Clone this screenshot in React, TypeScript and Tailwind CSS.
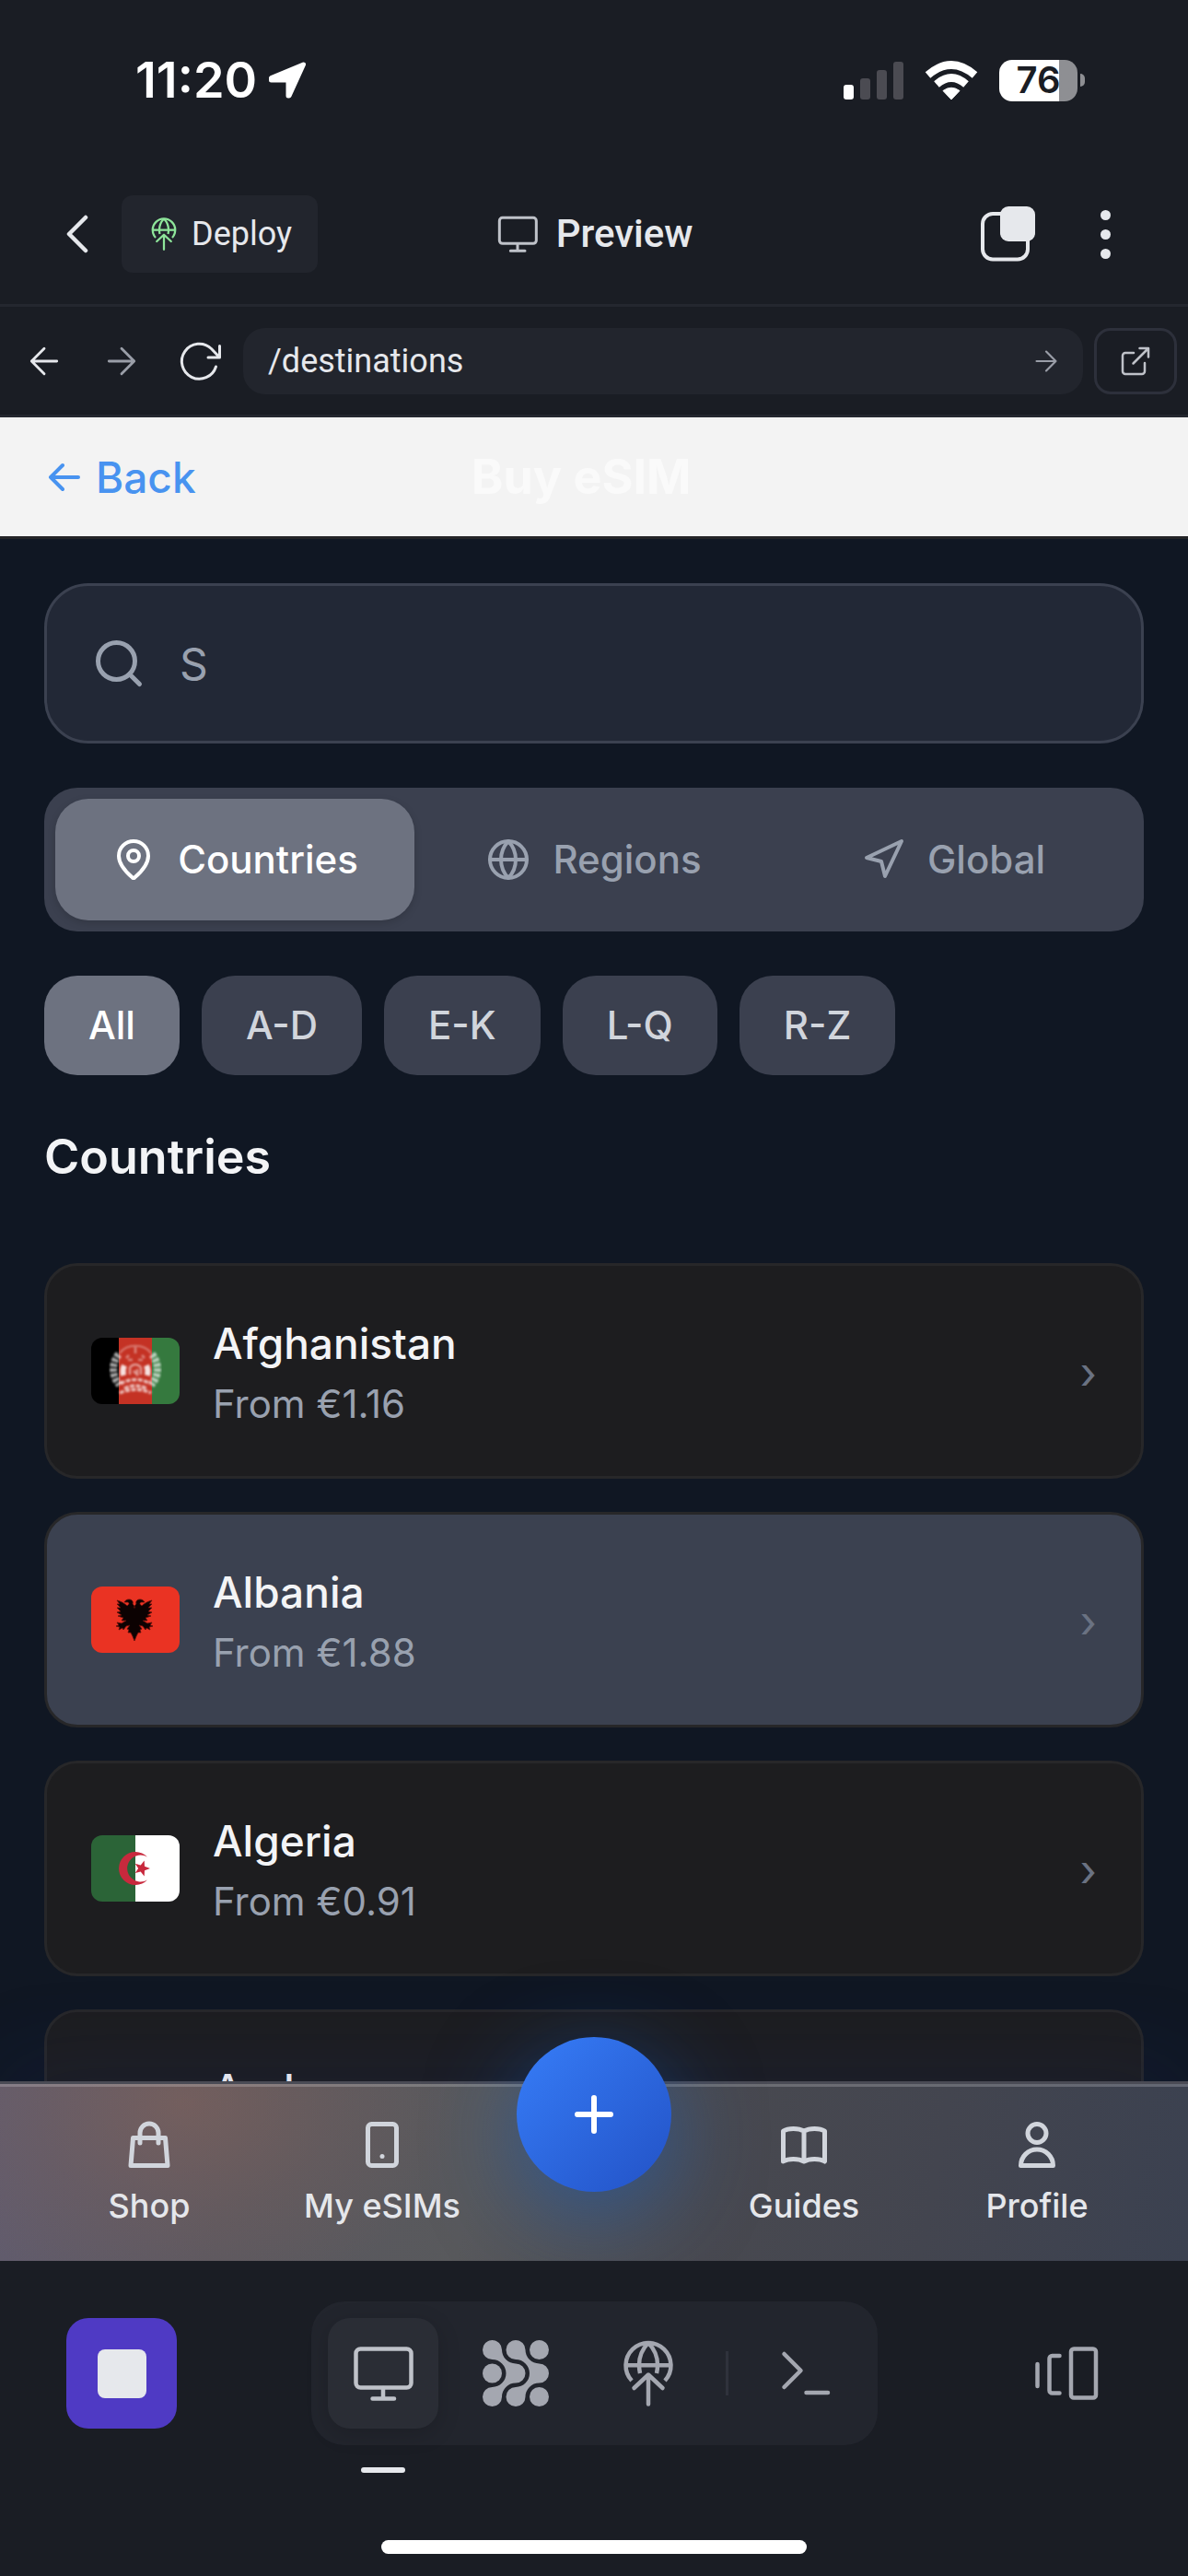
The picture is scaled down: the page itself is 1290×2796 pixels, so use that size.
import { useState, type ReactNode } from "react";
import { Globe, MapPin, Navigation, Search } from "lucide-react";

type IconProps = { className?: string };

function LocationArrow() {
  return (
    <svg viewBox="0 0 42 40" className="h-10 w-[42px]" fill="white" stroke="white" strokeWidth="5" strokeLinejoin="round" aria-hidden="true">
      <path d="M38.5 3 3.5 17.5v2.5h18.5v17h1z" />
    </svg>
  );
}

function Signal() {
  return (
    <svg viewBox="0 0 65 42" className="h-[42px] w-[65px]" aria-hidden="true">
      <rect x="0" y="26" width="11" height="16" rx="3" fill="white" />
      <rect x="18" y="19" width="11" height="23" rx="3" fill="#4b4b52" />
      <rect x="36" y="10" width="11" height="32" rx="3" fill="#4b4b52" />
      <rect x="54" y="1" width="11" height="41" rx="3" fill="#4b4b52" />
    </svg>
  );
}

function Wifi() {
  return (
    <svg viewBox="0 0 58 42" className="h-[42px] w-[58px]" aria-hidden="true">
      <path d="M29 42 20 32.5Q29 26 38 32.5z" fill="white" stroke="white" strokeWidth="1" strokeLinejoin="round" />
      <path d="M13 25.500Q29 11.500 45 25.500" fill="none" stroke="white" strokeWidth="8.500" />
      <path d="M3.500 15.500Q29 -6.500 54.500 15.500" fill="none" stroke="white" strokeWidth="8.500" />
    </svg>
  );
}

function Battery() {
  return (
    <div className="flex items-center gap-[3px]">
      <div className="flex h-[45px] w-[85px] items-center justify-center rounded-[14px] bg-linear-to-r from-white from-76% to-[#8e8f93] to-76%">
        <span className="text-[40px] leading-none font-semibold text-[#1a1d24]">76</span>
      </div>
      <span className="h-[14px] w-[5px] rounded-r-full bg-[#8e8f93]" />
    </div>
  );
}

function DeployIcon({ className }: IconProps) {
  return (
    <svg viewBox="0 0 72 72" className={className} fill="none" stroke="currentColor" strokeWidth="4.500" strokeLinejoin="round" aria-hidden="true">
      <path d="M18 44A24.500 24.500 0 1 1 54 44M11.500 27.300h49" />
      <path d="M36 3C30 9 26 18 26 27c0 3 .3 6 1 9M36 3c6 6 10 15 10 24 0 3-.3 6-1 9" />
      <path d="M36 38v31.500M20.500 52 36 37.500 51.500 52" strokeLinecap="round" />
    </svg>
  );
}

function MonitorIcon({ className }: IconProps) {
  return (
    <svg viewBox="0 0 72 72" className={className} fill="none" stroke="currentColor" strokeWidth="4.500" strokeLinecap="round" aria-hidden="true">
      <rect x="6.500" y="9.500" width="60" height="42" rx="5" />
      <path d="M36 52v11M24.500 63.500h23.500" />
    </svg>
  );
}

function AgentIcon({ className }: IconProps) {
  return (
    <svg viewBox="0 0 72 72" className={className} fill="currentColor" aria-hidden="true">
      <path d="M10.500 21A10.500 10.500 0 1 1 21 10.500 15 15 0 0 0 36 25.500 10.500 10.500 0 0 1 36 46.500 15 15 0 0 0 21 61.500 10.500 10.500 0 1 1 10.500 51 15 15 0 0 0 10.500 21z" />
      <path d="M36 21A10.500 10.500 0 1 1 46.500 10.500 15 15 0 0 0 61.500 25.500 10.500 10.500 0 0 1 61.500 46.500 15 15 0 0 0 46.500 61.500 10.500 10.500 0 1 1 36 51 15 15 0 0 0 36 21z" />
      <circle cx="10.500" cy="36" r="10.500" />
      <circle cx="61.500" cy="10.500" r="10.500" />
      <circle cx="61.500" cy="61.500" r="10.500" />
    </svg>
  );
}

function TerminalIcon({ className }: IconProps) {
  return (
    <svg viewBox="0 0 72 72" className={className} fill="none" stroke="currentColor" strokeWidth="4.500" strokeLinecap="round" strokeLinejoin="round" aria-hidden="true">
      <path d="M12.500 15 30.500 33 12.500 51M36.500 57H60" />
    </svg>
  );
}

function PanelsIcon({ className }: IconProps) {
  return (
    <svg viewBox="0 0 72 72" className={className} fill="none" stroke="currentColor" strokeWidth="4.500" strokeLinecap="round" strokeLinejoin="round" aria-hidden="true">
      <path d="M4.500 26v24M28.500 17h-8a3 3 0 0 0-3 3v34.500a3 3 0 0 0 3 3h8" />
      <rect x="41" y="9.500" width="27" height="53" rx="3" />
    </svg>
  );
}

function ArrowIcon({ className, flip }: IconProps & { flip?: boolean }) {
  return (
    <svg viewBox="0 0 36 36" className={className} fill="none" stroke="currentColor" strokeWidth="3" strokeLinecap="round" strokeLinejoin="round" aria-hidden="true">
      {flip ? <path d="M3.500 18h29M18 3.500 32.500 18 18 32.500" /> : <path d="M32.500 18h-29M18 3.500 3.500 18 18 32.500" />}
    </svg>
  );
}

function ReloadIcon() {
  return (
    <svg viewBox="0 0 48 48" className="size-12 overflow-visible" fill="none" stroke="currentColor" strokeWidth="3" strokeLinecap="round" strokeLinejoin="round" aria-hidden="true">
      <path d="M42.500 30A19 19 0 1 1 37.500 10.500L46.500 20M46.500 7.500V20H34" />
    </svg>
  );
}

function NavIcon({ children }: { children: ReactNode }) {
  return (
    <svg viewBox="0 0 60 60" className="size-[60px] text-gray-300" fill="none" stroke="currentColor" strokeWidth="5" strokeLinecap="round" strokeLinejoin="round" aria-hidden="true">
      {children}
    </svg>
  );
}

function AfghanistanFlag() {
  return (
    <svg viewBox="0 0 96 72" className="h-full w-full" aria-hidden="true">
      <defs>
        <filter id="soft">
          <feGaussianBlur stdDeviation="1.1" />
        </filter>
      </defs>
      <rect width="30" height="72" fill="#000" />
      <rect x="30" width="36" height="72" fill="#c43224" />
      <rect x="66" width="30" height="72" fill="#35793e" />
      <g filter="url(#soft)" fill="none" stroke="#fff">
        <path d="M30 18C22 27 22 42 31 51" strokeWidth="8" strokeDasharray="4 1.500" opacity=".65" />
        <path d="M66 18C74 27 74 42 65 51" strokeWidth="8" strokeDasharray="4 1.500" opacity=".65" />
        <path d="M31 17C38 6 58 6 65 17" strokeWidth="2" opacity=".35" />
        <path d="M48 10v7M38 22l3-3M58 22l-3-3M40 24h5M51 24h5" strokeWidth="2.500" opacity=".4" />
        <path d="M36 30c-2 4-2 7-1 11M60 30c2 4 2 7 1 11" strokeWidth="6" opacity=".85" />
        <path d="M42 32v8M54 32v8M42 32c4-4 8-4 12 0M46 36l5 5M50 34v6" strokeWidth="2.500" opacity=".5" />
        <path d="M32 50c8-6 24-6 32 0M36 55c8-4 16-4 24 0M31 60c10-5 24-5 34 0" strokeWidth="3.500" strokeDasharray="5 1.500" opacity=".65" />
      </g>
    </svg>
  );
}

function AlbaniaFlag() {
  return (
    <svg viewBox="0 0 96 72" className="h-full w-full" aria-hidden="true">
      <rect width="96" height="72" fill="#ea3323" />
      <path
        d="M48 23c-1-2-2-3-3-4 1-3-1-5-4-5-2 0-4 1-5 3l4 0c2 1 1 3-1 4-3-3-7-5-11-6l3 4-3 0 4 4-4 0 4 4-4 1 5 3-4 1 6 2-2 3 5 0-5 3-5-1 2 3-3 1 4 1-1 3 4-2 1 2 3-4 4-1-3 4 2 1-1 3 3 0 2 4 2 5 2-5 2-4 3 0-1-3 2-1-3-4 4 1 3 4 1-2 4 2-1-3 4-1-3-1 2-3-5 1-5-3 5 0-2-3 6-2-4-1 5-3-4-1 4-4-4 0 4-4-3 0 3-4c-4 1-8 3-11 6-2-1-3-3-1-4l4 0c-1-2-3-3-5-3-3 0-5 2-4 5-1 1-2 2-3 4z"
        fill="#0c0202"
        stroke="#5c100b"
        strokeWidth=".8"
      />
    </svg>
  );
}

function AlgeriaFlag() {
  return (
    <svg viewBox="0 0 96 72" className="h-full w-full" aria-hidden="true">
      <rect width="48" height="72" fill="#2b6437" />
      <rect x="48" width="48" height="72" fill="#fff" />
      <path d="M61 23.500A18 18 0 1 0 61 48.500 14.500 14.500 0 1 1 61 23.500z" fill="#c8293d" />
      <path d="M64 36l-6 2.200-.3 6.300-4-5-6 1.600 3.500-5.100-3.500-5.200 6 1.700 4-5 .3 6.300z" fill="#c8293d" />
    </svg>
  );
}

const countries = [
  { name: "Afghanistan", price: "From €1.16", flag: <AfghanistanFlag /> },
  { name: "Albania", price: "From €1.88", flag: <AlbaniaFlag /> },
  { name: "Algeria", price: "From €0.91", flag: <AlgeriaFlag /> },
  { name: "Andorra", price: "From €1.25", flag: null },
];

const scopes = [
  { label: "Countries", Icon: MapPin },
  { label: "Regions", Icon: Globe },
  { label: "Global", Icon: Navigation },
];

const ranges = ["All", "A-D", "E-K", "L-Q", "R-Z"];

function StatusBar() {
  return (
    <div className="flex h-[174px] shrink-0 items-center justify-between pr-28 pl-[147px] text-white">
      <div className="flex items-center gap-3">
        <span className="text-[54px] leading-none font-semibold">11:20</span>
        <LocationArrow />
      </div>
      <div className="flex items-center gap-[23px]">
        <Signal />
        <Wifi />
        <Battery />
      </div>
    </div>
  );
}

function WorkspaceHeader() {
  return (
    <header className="grid h-[159px] shrink-0 grid-cols-[1fr_auto_1fr] items-center border-b-[3px] border-[#24272f] px-[60px] pt-1 font-[Roboto,sans-serif] text-[#e6e8ec]">
      <div className="flex items-center gap-6">
        <button type="button" aria-label="Go back" className="flex size-12 items-center justify-center">
          <svg viewBox="0 0 24 42" className="h-[42px] w-6" fill="none" stroke="currentColor" strokeWidth="4.500" strokeLinecap="round" strokeLinejoin="round" aria-hidden="true">
            <path d="M21 3 3 21 21 39" />
          </svg>
        </button>
        <button type="button" className="flex h-[84px] items-center gap-3 rounded-xl bg-[#22252d] px-7">
          <DeployIcon className="size-9 text-[#8ee59a]" />
          <span className="text-[36px] leading-none">Deploy</span>
        </button>
      </div>
      <div className="flex items-center gap-[18px]">
        <MonitorIcon className="size-12 text-[#bfc2c9]" />
        <h1 className="text-[42px] leading-none font-medium">Preview</h1>
      </div>
      <div className="flex items-center justify-end gap-[52px] pr-[6px]">
        <button type="button" aria-label="Tabs">
          <svg viewBox="0 0 60 60" className="size-[60px]" aria-hidden="true">
            <rect x="3" y="8" width="49" height="49.500" rx="11" fill="none" stroke="currentColor" strokeWidth="4" />
            <rect x="22" y="0" width="38" height="38" rx="9" fill="currentColor" />
          </svg>
        </button>
        <button type="button" aria-label="More options" className="flex w-12 flex-col items-center gap-[10px]">
          <span className="size-[11px] rounded-full bg-current" />
          <span className="size-[11px] rounded-full bg-current" />
          <span className="size-[11px] rounded-full bg-current" />
        </button>
      </div>
    </header>
  );
}

function AddressBar() {
  const [path, setPath] = useState("/destinations");
  return (
    <div className="flex h-[120px] shrink-0 items-center gap-3 border-b-[3px] border-[#24272f] px-3 font-[Roboto,sans-serif] text-[#e6e8ec]">
      <button type="button" aria-label="Previous page" className="flex size-[72px] items-center justify-center">
        <ArrowIcon className="size-[34px]" />
      </button>
      <button type="button" aria-label="Next page" className="flex size-[72px] items-center justify-center text-[#9a9ea8]">
        <ArrowIcon flip className="size-[34px]" />
      </button>
      <button type="button" aria-label="Reload" className="flex size-[72px] items-center justify-center">
        <ReloadIcon />
      </button>
      <div className="flex h-[72px] min-w-0 flex-1 items-center rounded-3xl bg-[#22252d] px-[27px]">
        <input
          aria-label="Page path"
          value={path}
          onChange={(event) => setPath(event.target.value)}
          className="min-w-0 flex-1 bg-transparent text-[36px] leading-none outline-none"
        />
        <button type="button" aria-label="Open path" className="text-[#9a9ea8]">
          <ArrowIcon flip className="size-[26px]" />
        </button>
      </div>
      <button type="button" aria-label="Open in new tab" className="flex h-[72px] w-[90px] items-center justify-center rounded-[18px] border-[3px] border-[#2d303b] text-[#bfc2c9]">
        <svg viewBox="0 0 32 32" className="size-8" fill="none" stroke="currentColor" strokeWidth="2.500" strokeLinecap="round" strokeLinejoin="round" aria-hidden="true">
          <path d="M14 7H5a3 3 0 0 0-3 3v17a3 3 0 0 0 3 3h18a3 3 0 0 0 3-3V18M20.500 2H30v9.500M30 2 13.500 18.500" />
        </svg>
      </button>
    </div>
  );
}

function DestinationsPage() {
  const [query, setQuery] = useState("");
  const [scope, setScope] = useState("Countries");
  const [range, setRange] = useState("All");
  const [highlighted, setHighlighted] = useState("Albania");

  return (
    <main className="flex min-h-0 flex-1 flex-col overflow-hidden bg-[#101723]">
      <div className="flex h-[132px] shrink-0 items-center justify-between border-b-[3px] border-[#242427] bg-[#f3f3f3] px-12">
        <a href="#back" className="flex items-center gap-2 text-[46px] leading-none font-medium text-[#4893f0]">
          <svg viewBox="0 0 48 48" className="size-12" fill="none" stroke="currentColor" strokeWidth="4" strokeLinecap="round" strokeLinejoin="round" aria-hidden="true">
            <path d="M37 24H7M20 11 7 24l13 13" />
          </svg>
          Back
        </a>
        <h2 className="text-[52px] leading-none font-bold text-[#fafafa]">Buy eSIM</h2>
        <span className="w-48" />
      </div>

      <div className="flex flex-col px-12 pt-12">
        <label className="flex h-[174px] shrink-0 items-center gap-9 rounded-[48px] border-[3px] border-[#3b4150] bg-[#222836] px-12">
          <Search className="size-[60px] text-gray-400" strokeWidth={2} aria-hidden="true" />
          <input
            type="text"
            aria-label="Search destinations"
            placeholder="S"
            value={query}
            onChange={(event) => setQuery(event.target.value)}
            className="min-w-0 flex-1 bg-transparent text-[48px] leading-none text-gray-100 outline-none placeholder:text-gray-400"
          />
        </label>

        <div className="mt-12 grid h-[156px] shrink-0 grid-cols-3 rounded-[36px] bg-[#3b404f] p-3">
          {scopes.map(({ label, Icon }) => (
            <button
              key={label}
              type="button"
              aria-pressed={scope === label}
              onClick={() => setScope(label)}
              className={`flex items-center justify-center gap-6 rounded-[36px] text-[42px] leading-none font-medium ${
                scope === label ? "bg-[#6d7280] text-white shadow-[0_3px_9px_rgba(0,0,0,0.15)]" : "text-gray-400"
              }`}
            >
              <Icon className="size-12" strokeWidth={2} aria-hidden="true" />
              {label}
            </button>
          ))}
        </div>

        <div className="mt-12 flex shrink-0 gap-6">
          {ranges.map((label) => (
            <button
              key={label}
              type="button"
              aria-pressed={range === label}
              onClick={() => setRange(label)}
              className={`h-[108px] rounded-[36px] px-12 text-[42px] leading-none font-medium ${
                range === label ? "bg-[#6d7280] text-white" : "bg-[#3b404f] text-gray-300"
              }`}
            >
              {label}
            </button>
          ))}
        </div>

        <h3 className="mt-12 mb-[74px] text-[52px] leading-[82px] font-semibold text-gray-100">Countries</h3>

        <ul className="flex flex-col gap-9">
          {countries.map((country) => (
            <li key={country.name}>
              <button
                type="button"
                onClick={() => setHighlighted(country.name)}
                className={`flex w-full items-center gap-9 rounded-[36px] border-[3px] border-[#272729] px-12 py-12 text-left ${
                  highlighted === country.name ? "bg-[#3b4150]" : "bg-[#1d1d1f]"
                }`}
              >
                <span className="h-[72px] w-24 overflow-hidden rounded-xl">{country.flag}</span>
                <span className="flex flex-1 flex-col">
                  <span className="text-[46px] leading-[72px] font-medium text-gray-100">{country.name}</span>
                  <span className="text-[42px] leading-[60px] text-gray-400">{country.price}</span>
                </span>
                <span aria-hidden="true" className="pt-1 text-[48px] leading-none text-gray-500">
                  ›
                </span>
              </button>
            </li>
          ))}
        </ul>
      </div>
    </main>
  );
}

function NavItem({ label, children }: { label: string; children: ReactNode }) {
  return (
    <a href={`#${label.toLowerCase().replace(" ", "-")}`} className="flex flex-col items-center gap-3">
      <NavIcon>{children}</NavIcon>
      <span className="text-[36px] leading-[48px] font-medium whitespace-nowrap text-gray-200">{label}</span>
    </a>
  );
}

function AppNav() {
  return (
    <nav
      aria-label="App"
      className="relative shrink-0 border-t-[3px] border-[#4a4b55] bg-[radial-gradient(ellipse_300px_220px_at_200px_20px,rgba(130,98,90,0.6),rgba(120,95,90,0.3)_55%,transparent),linear-gradient(100deg,#625c6e_0%,#5b5860_20%,#58595c_40%,#484950_60%,#43454f_78%,#3b4150_100%)] shadow-[0_-24px_96px_rgba(25,50,140,0.12)]"
    >
      <div className="grid grid-cols-[324fr_182fr_278fr_178fr_328fr] border-t-[3px] border-white/20 pt-[33px] pb-9">
        <NavItem label="Shop">
          <path d="M20 28V17a10 10 0 0 1 20 0V28M12.500 22.500h35l2.500 30H10z" />
        </NavItem>
        <NavItem label="My eSIMs">
          <rect x="14.500" y="7.500" width="31" height="45" rx="4" />
          <path d="M30 42.500h.01" />
        </NavItem>
        <span />
        <NavItem label="Guides">
          <path d="M30 15v32M30 15C24 11.500 13 11.500 7.500 15V48C13 44.500 24 44.500 30 48 36 44.500 47 44.500 52.500 48V15C47 11.500 36 11.500 30 15z" />
        </NavItem>
        <NavItem label="Profile">
          <circle cx="30" cy="17.500" r="10" />
          <path d="M12.500 52.500a17.500 17.500 0 0 1 35 0z" />
        </NavItem>
      </div>
      <div className="pointer-events-none absolute inset-x-0 -top-[51px] bottom-0 flex justify-center">
        <button
          type="button"
          aria-label="Add eSIM"
          className="pointer-events-auto flex size-[168px] items-center justify-center rounded-full bg-linear-135 from-[#377df8] to-[#2352c6] text-white shadow-[0_24px_96px_rgba(22,93,190,0.55)]"
        >
          <svg viewBox="0 0 48 48" className="size-12" fill="none" stroke="currentColor" strokeWidth="6" strokeLinecap="round" aria-hidden="true">
            <path d="M24 6v36M6 24h36" />
          </svg>
        </button>
      </div>
    </nav>
  );
}

function WorkspaceToolbar() {
  return (
    <footer className="relative flex h-[342px] shrink-0 flex-col items-center justify-between bg-[#1a1d24] pt-11 pb-6">
      <div className="grid w-full grid-cols-[1fr_auto_1fr] items-center px-[72px]">
        <button type="button" aria-label="Stop" className="flex size-[120px] items-center justify-center rounded-3xl bg-[#4f3ac4]">
          <span className="size-[53px] rounded-lg bg-[#e6e8ec]" />
        </button>
        <div className="flex items-center gap-6 rounded-[36px] bg-[#22252d] p-[18px] text-[#a4a7b0]">
          <button
            type="button"
            aria-label="Preview"
            aria-pressed="true"
            className="relative flex size-[120px] items-center justify-center rounded-3xl bg-[#2a2d35] text-[#bfc2c9] shadow-[0_6px_24px_rgba(0,0,0,0.16)]"
          >
            <MonitorIcon className="size-[72px]" />
            <span className="absolute top-[162px] h-[6px] w-12 rounded-full bg-[#e6e8ec]" />
          </button>
          <button type="button" aria-label="Agent" className="flex size-[120px] items-center justify-center">
            <AgentIcon className="size-[72px]" />
          </button>
          <button type="button" aria-label="Deploy" className="flex size-[120px] items-center justify-center">
            <DeployIcon className="size-[72px]" />
          </button>
          <span className="h-12 w-[3px] bg-[#2f323c]" />
          <button type="button" aria-label="Shell" className="flex size-[120px] items-center justify-center">
            <TerminalIcon className="size-[72px]" />
          </button>
        </div>
        <button type="button" aria-label="All panels" className="flex size-[120px] items-center justify-center justify-self-end text-[#a4a7b0]">
          <PanelsIcon className="size-[72px]" />
        </button>
      </div>
      <span className="h-[15px] w-[462px] rounded-full bg-white" />
    </footer>
  );
}

export default function App() {
  return (
    <div className="flex h-screen flex-col overflow-hidden bg-[#1a1d24] font-[Inter,sans-serif]">
      <StatusBar />
      <WorkspaceHeader />
      <AddressBar />
      <DestinationsPage />
      <AppNav />
      <WorkspaceToolbar />
    </div>
  );
}
